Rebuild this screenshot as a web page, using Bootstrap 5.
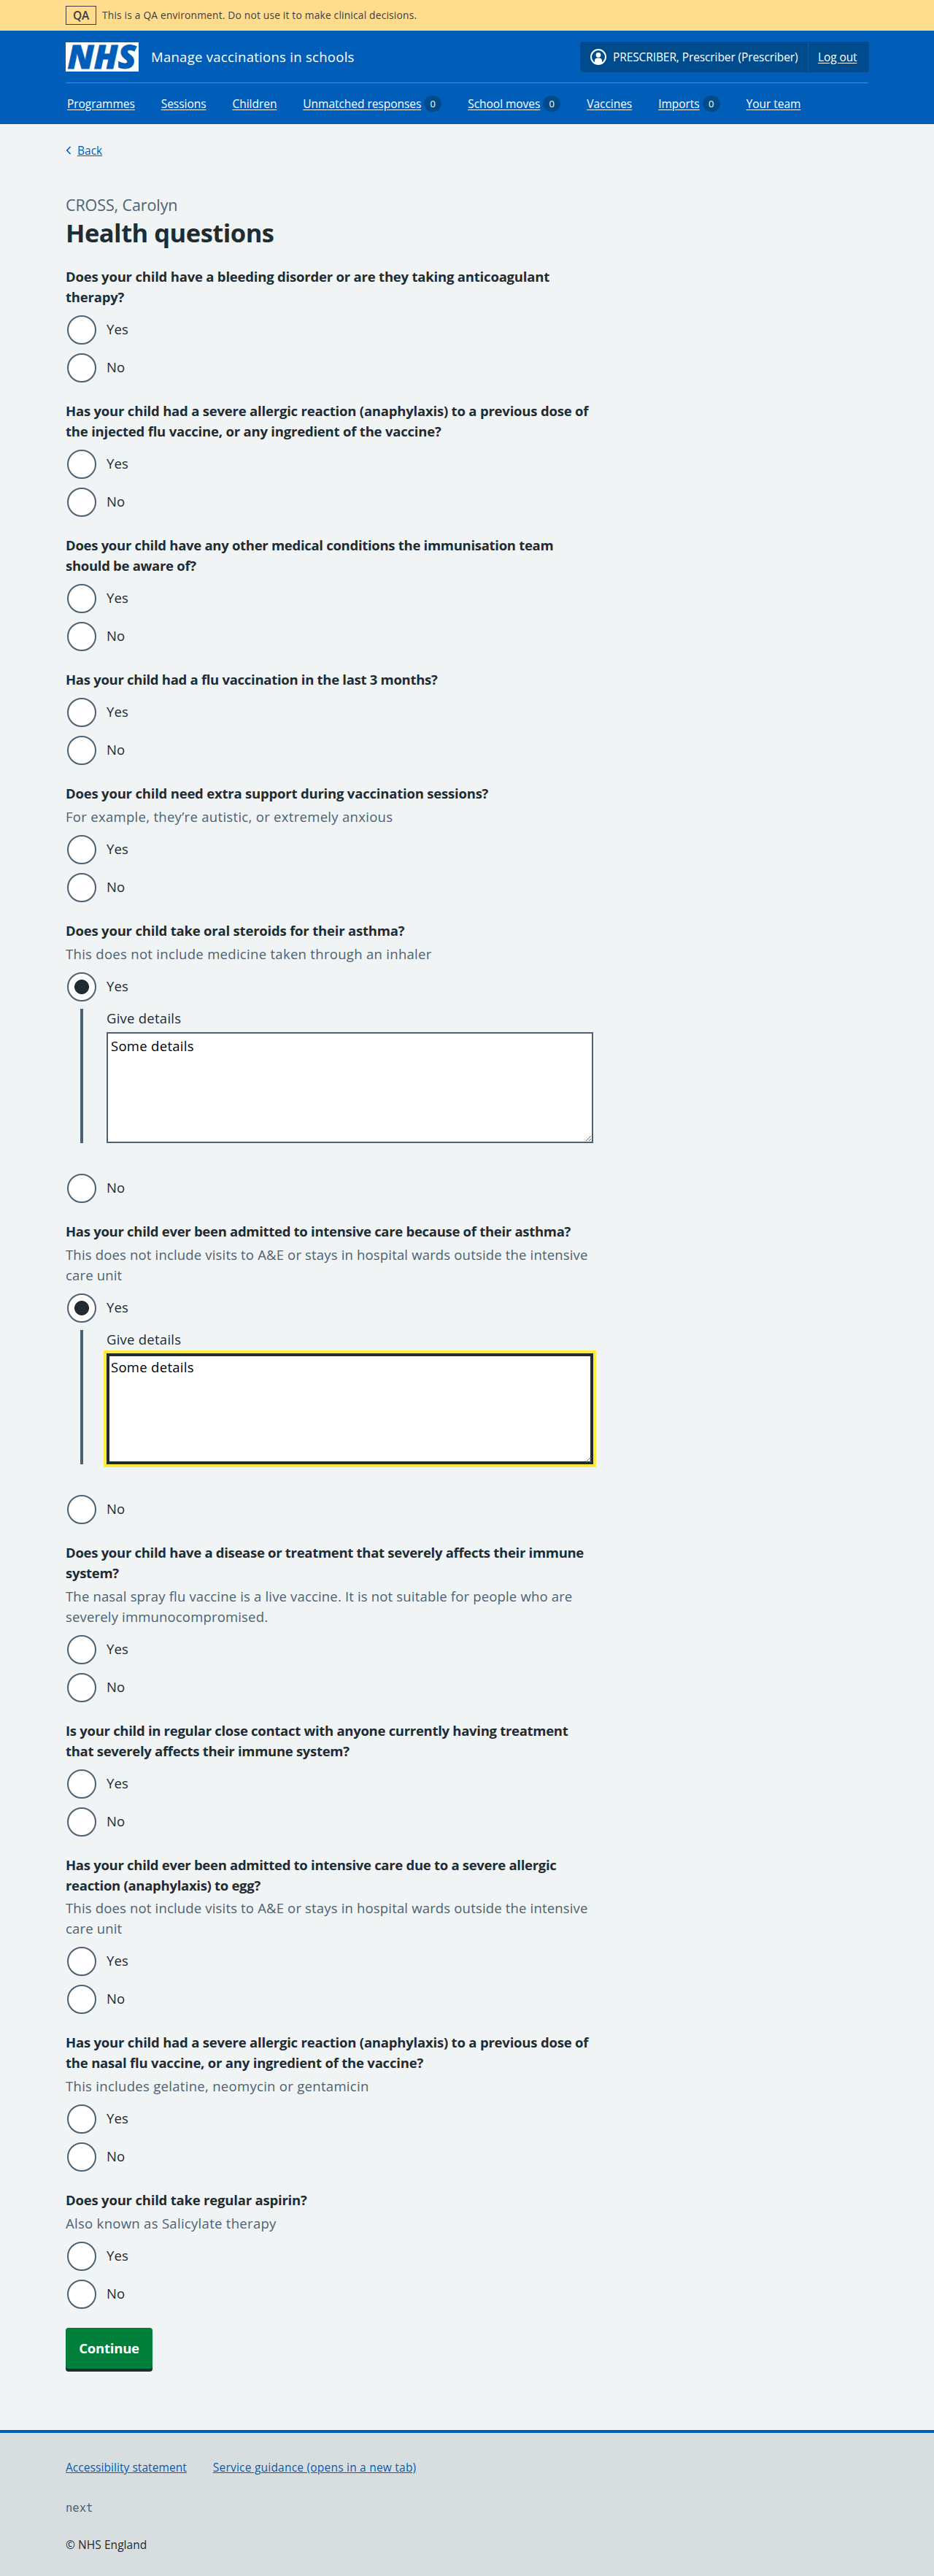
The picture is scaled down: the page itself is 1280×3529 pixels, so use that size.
<!DOCTYPE html>
<html lang="en">
<head>
<meta charset="utf-8">
<meta name="viewport" content="width=device-width, initial-scale=1">
<title>Health questions - Manage vaccinations in schools</title>
<link rel="stylesheet" href="https://cdn.jsdelivr.net/npm/bootstrap@5.3.0/dist/css/bootstrap.min.css">
<style>
  :root { --nhs-blue:#005eb8; --nhs-dark:#004b8c; --ink:#212b32; --grey:#4c6272; }
  body { font-family:"Open Sans","Noto Sans",sans-serif; font-size:18.5px; font-weight:450; line-height:28px; color:var(--ink); background:#f0f4f5; letter-spacing:.25px; }
  .page-width { width:1100px; margin:0 auto; }
  .env-bar { background:#ffdc8e; color:#403c40; height:42px; font-size:13.75px; letter-spacing:.2px; }
  .env-tag { width:42px; height:26px; border:1px solid #403c40; font-size:15.5px; font-weight:600; letter-spacing:-.3px; margin-right:8px; }
  .site-header { background:var(--nhs-blue); height:128px; color:#fff; }
  .header-top { height:72px; border-bottom:1px solid #4c8ecd; }
  .brand { overflow:visible; }
  .service-name { margin-left:17px; letter-spacing:.28px; }
  .account { background:var(--nhs-dark); border-radius:4px; height:42px; width:396px; font-size:15.5px; letter-spacing:-.1px; margin-right:-1px; }
  .account .user { padding-left:14px; width:312px; }
  .account .user svg { margin-right:9px; }
  .account .logout { border-left:1px solid var(--nhs-blue); height:40px; padding-left:13px; }
  .site-header a { color:#fff; text-underline-offset:2px; }
  .main-nav { height:56px; padding-left:2px; gap:36px; font-size:15.5px; letter-spacing:-.04px; }
  .count { width:24px; height:22px; border-radius:12px; background:var(--nhs-dark); font-size:13px; margin-left:4px; }
  a { color:var(--nhs-blue); }
  .back-link { height:28px; margin-top:20px; margin-bottom:46px; padding-top:3px; font-size:15.5px; line-height:24px; letter-spacing:0; }
  .back-link svg { margin-right:8px; }
  .caption-text { font-size:21.5px; line-height:33px; color:var(--grey); letter-spacing:-.1px; }
  h1 { font-size:34.5px; line-height:44px; font-weight:700; letter-spacing:-.5px; margin-bottom:25px; }
  .form-area { width:724px; }
  fieldset { margin-bottom:24px; }
  legend { font-size:18.5px; line-height:28px; font-weight:700; letter-spacing:-.2px; margin-top:-1px; margin-bottom:9px; white-space:nowrap; }
  .snug legend { letter-spacing:-.29px; }
  .has-hint legend { margin-bottom:4px; }
  .hint-text { color:var(--grey); margin-bottom:9px; letter-spacing:.3px; white-space:nowrap; }
  .snug .hint-text { letter-spacing:.17px; }
  .tight-lines legend { line-height:27.5px; }
  .form-check { min-height:44px; padding:2px; margin:0 0 8px; display:flex; align-items:center; }
  fieldset > .form-check:last-child { margin-bottom:0; }
  .form-check .form-check-input { float:none; width:40px; height:40px; margin:0 14px 0 0; border:2px solid var(--grey); background-color:#fff; flex:none; }
  .form-check .form-check-input:checked { background-color:#fff; border-color:var(--grey); background-image:radial-gradient(circle,var(--ink) 9.6px,transparent 10.3px); }
  .form-check-label { letter-spacing:.1px; padding-bottom:2px; }
  .details-panel { margin:0 0 40px 20px; border-left:4px solid var(--grey); padding-left:32px; }
  .details-panel label { display:block; line-height:26px; padding-bottom:6px; }
  .details-panel textarea { display:block; width:667px; height:152px; padding:3px 4px; border:2px solid var(--grey); border-radius:0; color:#000; background:#fff; font-size:18.5px; line-height:28px; letter-spacing:.3px; box-shadow:none; font-weight:450; }
  .details-panel textarea.is-focused { border-color:var(--ink); outline:4px solid #ffeb3b; box-shadow:inset 0 0 0 2px var(--ink); }
  .btn-continue { width:119px; height:56px; background:#007f3b; color:#fff; font-size:18.5px; font-weight:700; letter-spacing:-.2px; border:0; border-radius:4px; box-shadow:0 4px 0 var(--ink); padding:0; }
  main { padding-bottom:84px; }
  footer { height:200px; border-top:4px solid var(--nhs-blue); background:#d8dde0; font-size:15.5px; line-height:24px; padding-top:35px; letter-spacing:.06px; }
  footer .links { gap:36px; margin-bottom:32px; }
  .guidance-link { letter-spacing:.22px; }
  .env-name { font-family:"DejaVu Sans Mono",monospace; font-size:15.5px; color:var(--grey); letter-spacing:0; margin-bottom:26px; }
</style>
</head>
<body>
<div class="env-bar"><div class="page-width d-flex align-items-center h-100">
  <strong class="env-tag d-flex align-items-center justify-content-center">QA</strong><span>This is a QA environment. Do not use it to make clinical decisions.</span>
</div></div>

<header class="site-header"><div class="page-width">
  <div class="header-top d-flex align-items-center">
    <svg class="brand" width="100" height="40" viewBox="0 0 100 40" role="img" aria-label="NHS"><rect width="100" height="40" fill="#fff"/><text x="2.5" y="36" font-family="Open Sans, sans-serif" font-weight="800" font-style="italic" font-size="45" textLength="94" lengthAdjust="spacingAndGlyphs" letter-spacing="0" fill="#005eb8" stroke="#005eb8" stroke-width=".8">NHS</text></svg>
    <span class="service-name">Manage vaccinations in schools</span>
    <div class="account d-flex align-items-center ms-auto">
      <div class="user d-flex align-items-center">
        <svg width="22" height="22" viewBox="0 0 22 22"><circle cx="11" cy="11" r="10" fill="none" stroke="#fff" stroke-width="2"/><circle cx="11" cy="8.3" r="3.4" fill="#fff"/><path d="M6 19v-2.5a4 4 0 0 1 4-4h2a4 4 0 0 1 4 4V19l-5 2z" fill="#fff"/></svg>
        <span>PRESCRIBER, Prescriber (Prescriber)</span>
      </div>
      <div class="logout d-flex align-items-center"><a href="#">Log out</a></div>
    </div>
  </div>
  <nav class="main-nav d-flex align-items-center">
    <a href="#">Programmes</a>
    <a href="#">Sessions</a>
    <a href="#">Children</a>
    <div class="d-flex align-items-center"><a href="#">Unmatched responses</a><span class="count d-flex align-items-center justify-content-center">0</span></div>
    <div class="d-flex align-items-center"><a href="#">School moves</a><span class="count d-flex align-items-center justify-content-center">0</span></div>
    <a href="#">Vaccines</a>
    <div class="d-flex align-items-center"><a href="#">Imports</a><span class="count d-flex align-items-center justify-content-center">0</span></div>
    <a href="#">Your team</a>
  </nav>
</div></header>

<main class="page-width">
  <div class="back-link d-flex align-items-center"><svg width="8" height="12" viewBox="0 0 8 12"><path d="M6.5 1 1.7 6l4.8 5" fill="none" stroke="#005eb8" stroke-width="1.6"/></svg><a href="#">Back</a></div>
  <div class="form-area">
    <div class="caption-text">CROSS, Carolyn</div>
    <h1>Health questions</h1>
    <form id="questions">
      <fieldset><legend>Does your child have a bleeding disorder or are they taking anticoagulant<br>therapy?</legend></fieldset>
      <fieldset><legend>Has your child had a severe allergic reaction (anaphylaxis) to a previous dose of<br>the injected flu vaccine, or any ingredient of the vaccine?</legend></fieldset>
      <fieldset class="snug"><legend>Does your child have any other medical conditions the immunisation team<br>should be aware of?</legend></fieldset>
      <fieldset class="snug"><legend>Has your child had a flu vaccination in the last 3 months?</legend></fieldset>
      <fieldset class="has-hint"><legend>Does your child need extra support during vaccination sessions?</legend><div class="hint-text">For example, they’re autistic, or extremely anxious</div></fieldset>
      <fieldset class="has-hint" data-details="plain"><legend>Does your child take oral steroids for their asthma?</legend><div class="hint-text">This does not include medicine taken through an inhaler</div></fieldset>
      <fieldset class="has-hint snug" data-details="is-focused"><legend>Has your child ever been admitted to intensive care because of their asthma?</legend><div class="hint-text">This does not include visits to A&amp;E or stays in hospital wards outside the intensive<br>care unit</div></fieldset>
      <fieldset class="has-hint snug"><legend>Does your child have a disease or treatment that severely affects their immune<br>system?</legend><div class="hint-text">The nasal spray flu vaccine is a live vaccine. It is not suitable for people who are<br>severely immunocompromised.</div></fieldset>
      <fieldset class="snug"><legend>Is your child in regular close contact with anyone currently having treatment<br>that severely affects their immune system?</legend></fieldset>
      <fieldset class="has-hint tight-lines snug"><legend>Has your child ever been admitted to intensive care due to a severe allergic<br>reaction (anaphylaxis) to egg?</legend><div class="hint-text">This does not include visits to A&amp;E or stays in hospital wards outside the intensive<br>care unit</div></fieldset>
      <fieldset class="has-hint"><legend>Has your child had a severe allergic reaction (anaphylaxis) to a previous dose of<br>the nasal flu vaccine, or any ingredient of the vaccine?</legend><div class="hint-text">This includes gelatine, neomycin or gentamicin</div></fieldset>
      <fieldset class="has-hint"><legend>Does your child take regular aspirin?</legend><div class="hint-text">Also known as Salicylate therapy</div></fieldset>
      <button type="button" class="btn btn-continue d-block">Continue</button>
    </form>
  </div>
</main>

<footer><div class="page-width">
  <div class="links d-flex"><a href="#">Accessibility statement</a><a href="#" class="guidance-link">Service guidance (opens in a new tab)</a></div>
  <div class="env-name">next</div>
  <div>© NHS England</div>
</div></footer>

<script src="https://cdn.jsdelivr.net/npm/bootstrap@5.3.0/dist/js/bootstrap.bundle.min.js"></script>
<script>
  document.querySelectorAll('#questions fieldset').forEach((set, i) => {
    const details = set.dataset.details;
    const radio = (label) => `<div class="form-check"><input class="form-check-input" type="radio" name="q${i}" id="q${i}-${label}"${details && label === 'Yes' ? ' checked' : ''}><label class="form-check-label" for="q${i}-${label}">${label}</label></div>`;
    const panel = details ? `<div class="details-panel"><label for="d${i}">Give details</label><textarea class="form-control ${details}" id="d${i}">Some details</textarea></div>` : '';
    set.insertAdjacentHTML('beforeend', radio('Yes') + panel + radio('No'));
  });
</script>
</body>
</html>
